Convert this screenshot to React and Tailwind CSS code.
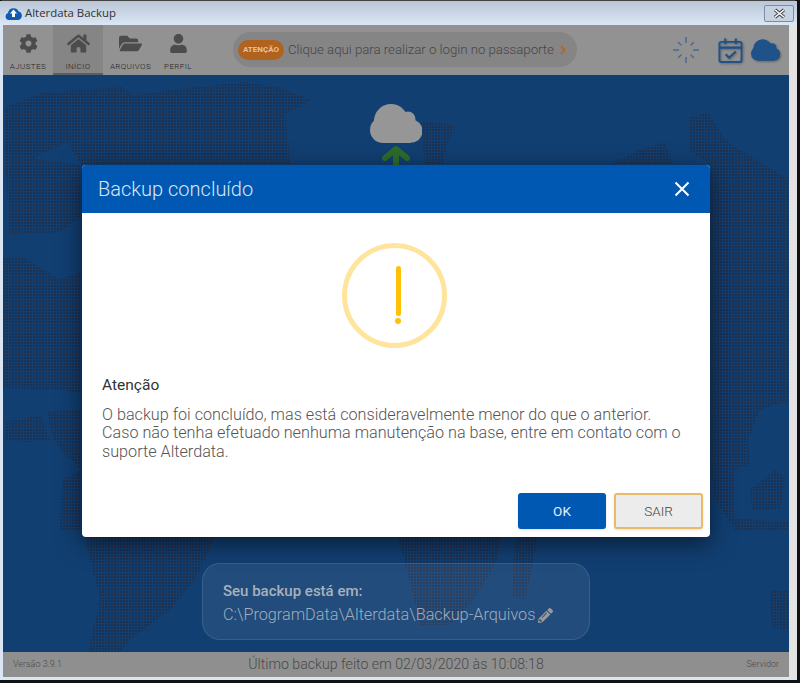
import { FaCog, FaHome, FaFolderOpen, FaUser, FaPencilAlt, FaChevronRight } from 'react-icons/fa';

const ROBOTO = 'font-["Roboto",sans-serif]';

const tabs = [
  { label: 'AJUSTES', Icon: FaCog, width: 'w-[50px]', size: 19 },
  { label: 'INÍCIO', Icon: FaHome, width: 'w-[50px]', active: true, size: 23 },
  { label: 'ARQUIVOS', Icon: FaFolderOpen, width: 'w-[55px]', size: 23 },
  { label: 'PERFIL', Icon: FaUser, width: 'w-[40px]', size: 19 },
];

function WorldMap() {
  return (
    <svg className="absolute inset-0 h-full w-full" viewBox="3 75 786 577">
      <defs>
        <pattern id="dots" width="3" height="3" patternUnits="userSpaceOnUse">
          <rect width="2" height="2" fill="#1d3150" />
        </pattern>
      </defs>
      <g fill="url(#dots)">
        {/* top band */}
        <path d="M5 107 L43 93 L122 87 L133 95 L189 88 L245 82 L280 88 L311 100 L285 115 L288 140 L290 165 L290 215 L82 215 L82 165 L66 142 L30 160 L5 167 Z" />
        {/* left of the dialog */}
        <path d="M5 155 L82 165 L82 215 L60 232 L10 235 Z" />
        <path d="M3 258 L25 258 L45 270 L60 280 L82 272 L82 395 L65 390 L3 388 Z" />
        <path d="M5 422 L40 415 L50 440 L25 442 L5 440 Z" />
        <path d="M48 412 L82 410 L82 470 L60 450 L50 430 Z" />
        <path d="M62 480 L82 470 L82 530 L60 530 Z" />
        {/* top centre */}
        <path d="M420 122 L455 125 L445 150 L442 170 L425 165 Z" />
        {/* right side */}
        <path d="M690 118 L708 112 L725 140 L765 165 L789 180 L789 400 L760 410 L748 440 L750 465 L735 470 L735 530 L715 500 L710 470 L710 165 L690 150 Z" />
        <path d="M610 165 L640 150 L665 142 L672 165 Z" />
        <path d="M750 490 L775 470 L785 478 L780 510 L752 510 Z" />
        <path d="M735 518 L789 522 L789 530 L735 530 Z" />
        {/* below the dialog */}
        <path d="M85 537 L215 537 L195 580 L170 610 L130 640 L120 652 L88 652 L100 600 Z" />
        <path d="M398 537 L500 537 L498 560 L480 590 L465 610 L450 625 L420 625 L412 590 Z" />
        <path d="M515 537 L537 537 L532 570 L525 600 L512 596 Z" />
        <path d="M770 590 L789 590 L789 630 L772 628 Z" />
      </g>
    </svg>
  );
}

function Cloud({ className, width, height }) {
  return (
    <svg className={className} width={width} height={height} viewBox="0 0 52 39" fill="currentColor">
      <circle cx="13" cy="26" r="13" />
      <circle cx="21" cy="17" r="17" />
      <circle cx="38" cy="15" r="7.5" />
      <circle cx="41" cy="27" r="11.5" />
      <rect x="13" y="20" width="28" height="19" />
    </svg>
  );
}

function Spinner() {
  const spokes = [0, 45, 90, 135, 180, 225, 270, 315];
  return (
    <svg width="28" height="28" viewBox="0 0 28 28" className="text-[#3f6590]">
      {spokes.map(a => (
        <line
          key={a}
          x1="14"
          y1={a % 90 === 0 ? 1 : 3}
          x2="14"
          y2={a % 90 === 0 ? 7 : 7.5}
          stroke="currentColor"
          strokeWidth="1.3"
          transform={`rotate(${a} 14 14)`}
        />
      ))}
    </svg>
  );
}

function CalendarIcon() {
  return (
    <svg width="25" height="27" viewBox="0 0 26 27" fill="none" stroke="#1f5288" strokeWidth="2" className="drop-shadow-[1px_1px_1px_rgba(0,0,0,0.3)]">
      <rect x="1.5" y="4.5" width="23" height="21" rx="2" />
      <path d="M1.5 10.5h23" strokeWidth="2.5" />
      <path d="M7.5 1v6M18.5 1v6" strokeWidth="2.2" />
      <path d="M8 17.5l3.5 3.5 7-6.5" strokeWidth="2.2" />
    </svg>
  );
}

function AppLogo() {
  return (
    <svg width="17" height="14" viewBox="0 0 17 14">
      <path d="M4 14a3.6 3.6 0 0 1-1-7 5.6 5.6 0 0 1 10.6-1.6A4.4 4.4 0 0 1 13.2 14Z" fill="#0f5cb0" />
      <path d="M8.5 3.6L12 7.4H10V11H7V7.4H5Z" fill="#fff" />
    </svg>
  );
}

function Toolbar() {
  return (
    <div className="flex h-[50px] items-stretch bg-[#929292]">
      <div className="flex">
        {tabs.map(({ label, Icon, width, active, size }) => (
          <div
            key={label}
            className={`${width} flex flex-col items-center border-b-2 ${active ? 'border-[#5e5e5e] bg-[#858585]' : 'border-transparent'}`}
          >
            <div className="flex h-[33px] items-center pt-1 text-[#4c4c4c]">
              <Icon size={size} />
            </div>
            <span className={`${ROBOTO} mt-[4px] text-[8px] font-light leading-[10px] tracking-[0.4px] whitespace-nowrap text-[#222]`}>{label}</span>
          </div>
        ))}
      </div>
      <div className="ml-[35px] mt-[7px] flex h-[35px] w-[344px] items-center rounded-full bg-[#858585] pl-[5px]">
        <span className={`${ROBOTO} flex h-5 w-[46px] shrink-0 items-center justify-center rounded-full bg-[#b0621f] text-[8px] font-bold text-[#e9c09a]`}>
          ATENÇÃO
        </span>
        <span className={`${ROBOTO} ml-1 text-[13.3px] font-light tracking-[-0.05px] whitespace-nowrap text-[#454545]`}>
          Clique aqui para realizar o login no passaporte
        </span>
        <FaChevronRight size={10} className="ml-1 text-[#b8621a]" />
      </div>
      <div className="ml-auto flex items-center pr-[9px]">
        <Spinner />
        <div className="ml-[18px]">
          <CalendarIcon />
        </div>
        <Cloud className="ml-2 text-[#1f5288] drop-shadow-[1px_1px_1px_rgba(0,0,0,0.3)]" width={29} height={22} />
      </div>
    </div>
  );
}

function Modal() {
  return (
    <div className="absolute left-[79px] top-[90px] flex h-[372px] w-[628px] flex-col overflow-hidden rounded-[4px] bg-white shadow-[0_6px_24px_rgba(0,0,0,0.55)]">
      <div className="flex h-12 shrink-0 items-center justify-between bg-[#0058b3] pl-4 pr-5">
        <h2 className={`${ROBOTO} text-[20px] font-light text-[#d9e6f5]`}>Backup concluído</h2>
        <svg width="16" height="16" viewBox="0 0 16 16" stroke="#fff" strokeWidth="2">
          <path d="M1.5 1.5l13 13M14.5 1.5l-13 13" />
        </svg>
      </div>
      <div className="flex flex-1 flex-col px-5">
        <div className="mt-[30px] flex justify-center pr-[4px]">
          <div className="relative h-[105px] w-[105px] rounded-full border-[5px] border-[#ffe49c]">
            <div className="absolute left-[49px] top-[18px] h-[50px] w-[5px] rounded-full bg-[#ffc107]" />
            <div className="absolute left-[48.5px] top-[70px] h-[6px] w-[6px] rounded-full bg-[#ffc107]" />
          </div>
        </div>
        <p className={`${ROBOTO} mt-[28px] text-[15.5px] leading-[18px] text-[#333]`}>Atenção</p>
        <p className={`${ROBOTO} mt-[12px] text-[16.2px] font-light leading-[18.4px] text-[#555]`}>
          O backup foi concluído, mas está consideravelmente menor do que o anterior.
          <br />
          Caso não tenha efetuado nenhuma manutenção na base, entre em contato com o
          <br />
          suporte Alterdata.
        </p>
        <div className="mt-auto mb-2 flex justify-end gap-2 -mr-[13px]">
          <button className={`${ROBOTO} h-9 w-[88px] rounded-[3px] bg-[#0058b3] text-[13.5px] text-[#e8f0fa] shadow-sm`}>OK</button>
          <button className={`${ROBOTO} h-9 w-[89px] rounded-[3px] border-2 border-[#e9bb66] bg-[#ececec] text-[13.5px] font-light text-[#444] shadow-sm`}>SAIR</button>
        </div>
      </div>
    </div>
  );
}

export default function App() {
  return (
    <div className="h-[683px] w-[800px] overflow-hidden bg-[#111]">
      <div className="flex h-[680px] w-[797px] flex-col rounded-t-[4px] border-t border-[#444] bg-[#dbe6f4]">
        {/* Title bar */}
        <div className="flex h-6 shrink-0 items-center bg-gradient-to-b from-[#b9c6d6] to-[#dce7f5] pl-[5px]">
          <AppLogo />
          <span className="ml-[3px] font-['Open_Sans',sans-serif] text-[11.4px] text-[#333]">Alterdata Backup</span>
          <div className="ml-auto mr-[3px] flex h-[17px] w-[30px] items-center justify-center rounded-[2px] border border-[#7d8ba8] bg-[#c5d2e2]">
            <svg width="13" height="11" viewBox="0 0 13 11" fill="none">
              <path d="M2 1.8l9 7.4M11 1.8l-9 7.4" stroke="#333" strokeWidth="3.4" />
              <path d="M2 1.8l9 7.4M11 1.8l-9 7.4" stroke="#f2f2f2" strokeWidth="1.6" />
            </svg>
          </div>
        </div>

        <div className="flex flex-1 pb-[3px] pl-[3px]">
          <div className="flex w-[786px] flex-col">
            <Toolbar />

            <div className="relative flex-1 overflow-hidden bg-[#113f72]">
              <WorldMap />
              <div className="relative flex flex-col items-center pt-[29px]">
                <Cloud className="text-[#969696]" width={52} height={39} />
              </div>
              <svg className="absolute left-[379px] top-[70px]" width="28" height="20" viewBox="0 0 28 20" fill="none" stroke="#2e6b2c" strokeWidth="6" strokeLinecap="round" strokeLinejoin="round">
                <path d="M3 13L14 4L25 13" />
                <path d="M14 6V22" strokeLinecap="butt" />
              </svg>
              <Modal />
              <div className="absolute bottom-[12px] left-[199px] h-[77px] w-[388px] rounded-[18px] border border-white/10 bg-white/[0.07] px-5 pt-[15px]">
                <p className={`${ROBOTO} text-[15px] leading-6 font-medium text-[#a9b1bc]`}>Seu backup está em:</p>
                <div className="flex items-center gap-[3px]">
                  <span className={`${ROBOTO} text-[16.25px] leading-6 font-light text-[#a0acbd]`}>C:\ProgramData\Alterdata\Backup-Arquivos</span>
                  <FaPencilAlt size={15} className="text-[#9a9a9a]" />
                </div>
              </div>
            </div>

            {/* Status bar */}
            <div className={`${ROBOTO} flex h-[25px] items-center bg-[#8f8f8f] px-[10px] text-[#4a4a4a]`}>
              <span className="flex-1 text-[9px] font-light">Versão 3.9.1</span>
              <span className="text-[14.15px] font-light">Último backup feito em 02/03/2020 às 10:08:18</span>
              <span className="flex-1 text-right text-[9px] font-light">Servidor</span>
            </div>
          </div>
          <div className="w-2 bg-[#e3e3e3]" />
        </div>
      </div>
    </div>
  );
}
